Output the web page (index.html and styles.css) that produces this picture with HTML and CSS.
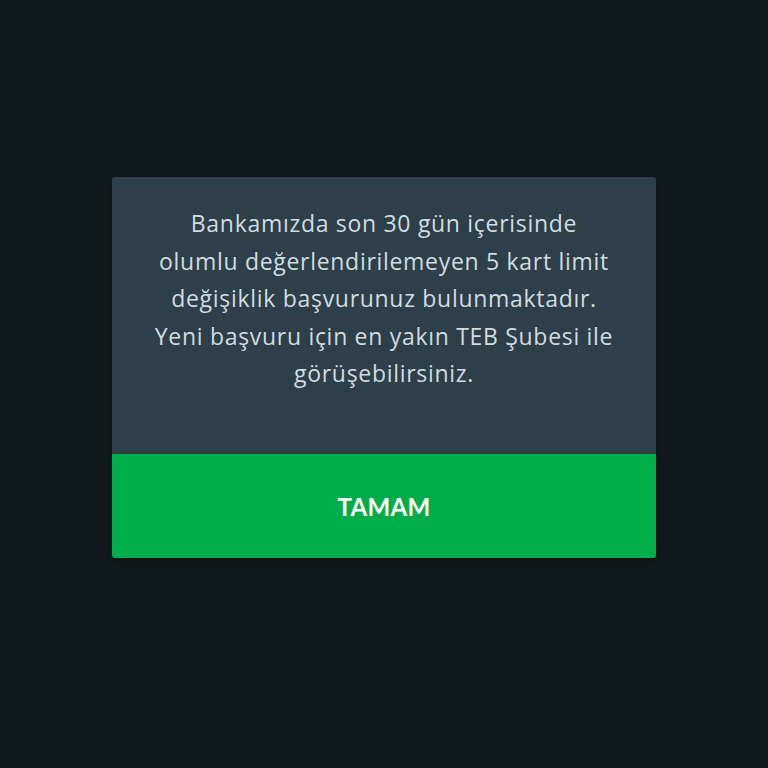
FILE: index.html
```html
<!DOCTYPE html>
<html lang="tr">
<head>
<meta charset="utf-8">
<link rel="stylesheet" href="styles.css">
</head>
<body>
<div class="screen">
  <div class="dialog">
    <div class="dialog-body">
      <p class="message">Bankamızda son 30 gün içerisinde<br>olumlu değerlendirilemeyen 5 kart limit<br>değişiklik başvurunuz bulunmaktadır.<br>Yeni başvuru için en yakın TEB Şubesi ile<br>görüşebilirsiniz.</p>
    </div>
    <div class="dialog-action">TAMAM</div>
  </div>
</div>
</body>
</html>
```
FILE: styles.css
```css
html, body {
  margin: 0;
  padding: 0;
  background: #111a1d;
}
.screen {
  width: 768px;
  height: 768px;
  display: flex;
  justify-content: center;
  padding-top: 177px;
  box-sizing: border-box;
}
.dialog {
  width: 544px;
  height: 381px;
  display: flex;
  flex-direction: column;
  border-radius: 3px;
  overflow: hidden;
  box-shadow: 0 4px 14px rgba(0,0,0,0.35);
}
.dialog-body {
  background: #2d3f48;
  height: 277px;
  box-sizing: border-box;
  padding-top: 28px;
}
.message {
  margin: 0;
  font-family: "Open Sans", Lato, sans-serif;
  font-size: 23px;
  line-height: 37.5px;
  letter-spacing: 0.7px;
  color: #d1dce0;
  text-align: center;
}
.dialog-action {
  flex: 1;
  background: #00ad4b;
  color: #ffffff;
  font-family: Lato, "Noto Sans", sans-serif;
  font-weight: 700;
  font-size: 24px;
  display: flex;
  align-items: center;
  justify-content: center;
  letter-spacing: 0.3px;
}
```
